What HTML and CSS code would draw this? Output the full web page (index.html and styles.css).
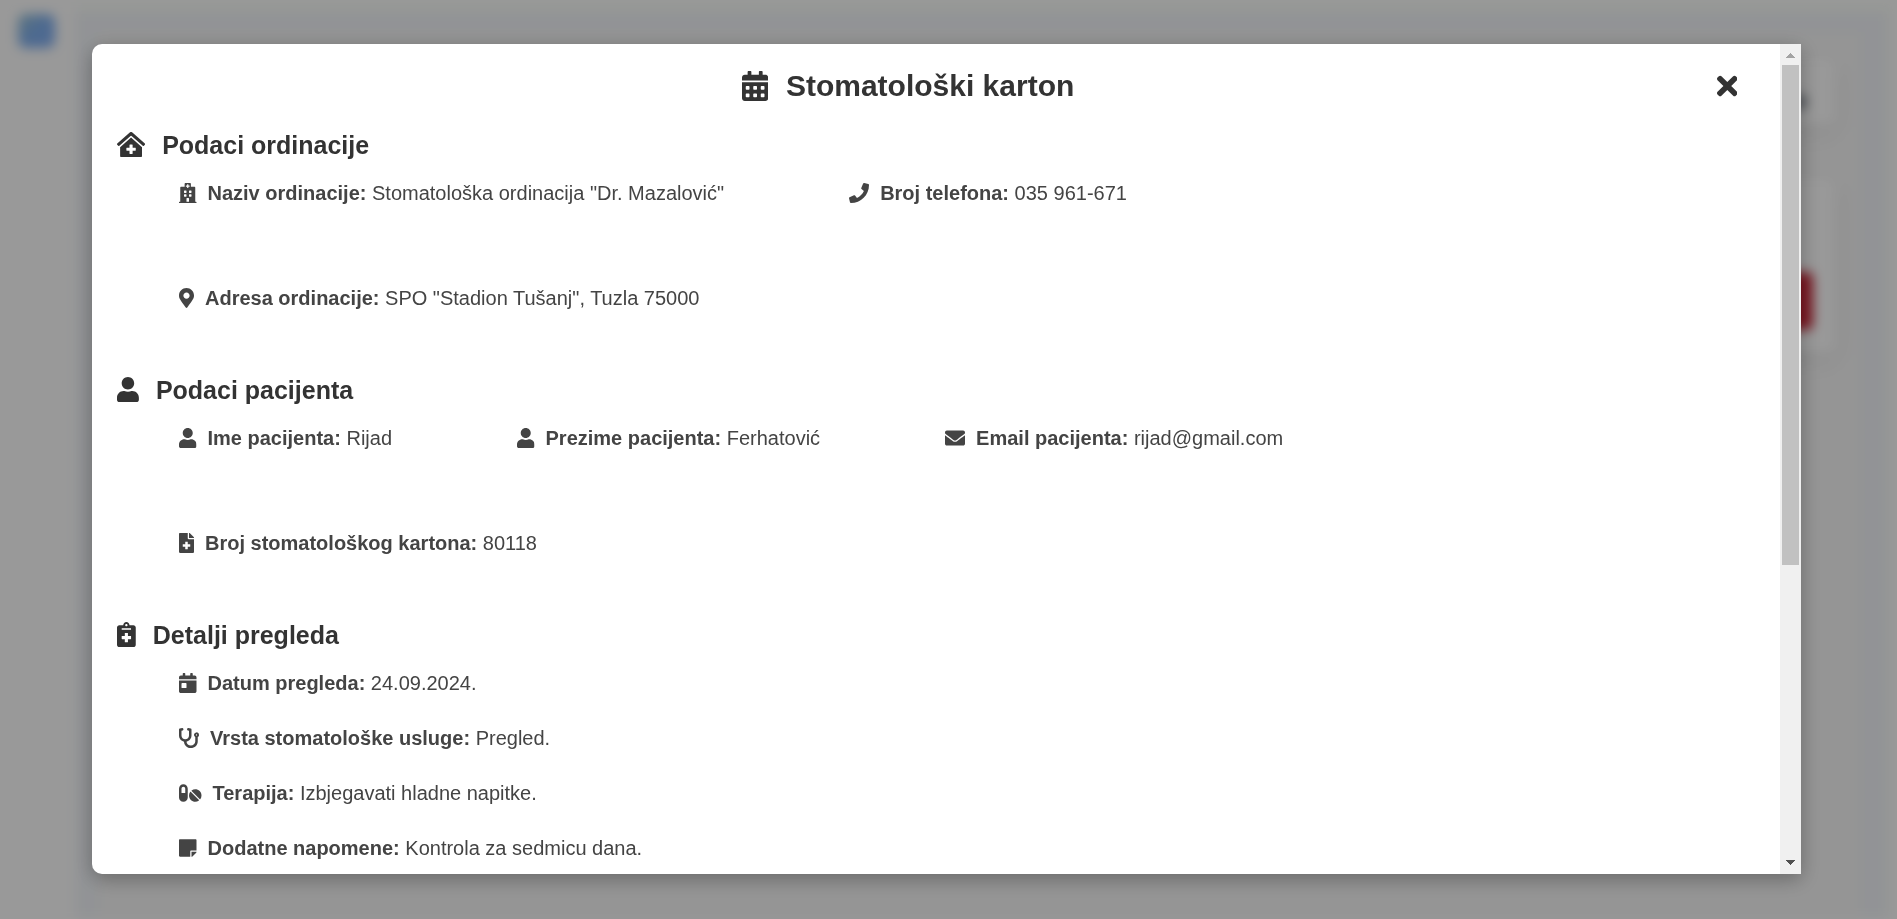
FILE: index.html
```html
<!DOCTYPE html>
<html lang="bs">
<head>
<meta charset="utf-8">
<meta name="viewport" content="width=device-width, initial-scale=1">
<title>Stomatološki karton</title>
<link rel="stylesheet" href="styles.css">
</head>
<body>
<svg class="sprite" aria-hidden="true">
  <symbol id="user" viewBox="0 0 448 512"><path d="M224 256c70.7 0 128-57.3 128-128S294.7 0 224 0 96 57.3 96 128s57.3 128 128 128zm89.6 32h-16.7c-22.2 10.2-46.9 16-72.9 16s-50.6-5.8-72.9-16h-16.7C60.2 288 0 348.2 0 422.4V464c0 26.5 21.5 48 48 48h352c26.5 0 48-21.5 48-48v-41.6c0-74.2-60.2-134.4-134.4-134.4z"/></symbol>
</svg>

<div class="page" aria-hidden="true">
  <div class="sidebar"><div class="logo"></div></div>
  <div class="content">
    <div class="panel">
      <div class="card card-top"><div class="dot"></div></div>
      <div class="card card-main"><div class="danger"></div></div>
    </div>
  </div>
</div>

<div class="overlay">
  <div class="modal" role="dialog" aria-modal="true" aria-labelledby="modal-title">
    <div class="modal-body">
      <header class="modal-header">
        <h1 class="modal-title" id="modal-title">
          <svg class="icon" viewBox="0 0 448 512" aria-hidden="true"><path d="M0 464c0 26.5 21.5 48 48 48h352c26.5 0 48-21.5 48-48V192H0v272zm320-196c0-6.600 5.400-12 12-12h40c6.600 0 12 5.400 12 12v40c0 6.600-5.400 12-12 12h-40c-6.600 0-12-5.400-12-12v-40zm0 128c0-6.600 5.400-12 12-12h40c6.600 0 12 5.400 12 12v40c0 6.600-5.400 12-12 12h-40c-6.600 0-12-5.400-12-12v-40zM192 268c0-6.600 5.400-12 12-12h40c6.600 0 12 5.400 12 12v40c0 6.600-5.400 12-12 12h-40c-6.600 0-12-5.400-12-12v-40zm0 128c0-6.600 5.400-12 12-12h40c6.600 0 12 5.400 12 12v40c0 6.600-5.400 12-12 12h-40c-6.600 0-12-5.400-12-12v-40zM64 268c0-6.600 5.400-12 12-12h40c6.600 0 12 5.400 12 12v40c0 6.600-5.400 12-12 12H76c-6.600 0-12-5.400-12-12v-40zm0 128c0-6.600 5.400-12 12-12h40c6.600 0 12 5.400 12 12v40c0 6.600-5.400 12-12 12H76c-6.600 0-12-5.400-12-12v-40zM400 64h-48V16c0-8.800-7.200-16-16-16h-32c-8.800 0-16 7.200-16 16v48H160V16c0-8.800-7.200-16-16-16h-32c-8.800 0-16 7.200-16 16v48H48C21.500 64 0 85.500 0 112v48h448v-48c0-26.500-21.500-48-48-48z"/></svg>
          <span>Stomatološki karton</span>
        </h1>
        <button class="close" type="button" aria-label="Zatvori">
          <svg class="icon" viewBox="0 0 352 512" aria-hidden="true"><path d="M242.72 256l100.07-100.07c12.28-12.28 12.28-32.19 0-44.48l-22.24-22.24c-12.28-12.28-32.19-12.28-44.48 0L176 189.28 75.93 89.21c-12.28-12.28-32.19-12.28-44.48 0L9.21 111.45c-12.28 12.28-12.28 32.19 0 44.48L109.28 256 9.21 356.07c-12.28 12.28-12.28 32.19 0 44.48l22.24 22.24c12.28 12.28 32.2 12.28 44.48 0L176 322.72l100.07 100.07c12.28 12.28 32.2 12.28 44.48 0l22.24-22.24c12.28-12.28 12.28-32.19 0-44.48L242.72 256z"/></svg>
        </button>
      </header>

      <section class="section">
        <h2 class="section-title">
          <svg class="icon" viewBox="0 0 576 512" aria-hidden="true"><path d="M288 115L69.47 307.71c-1.62 1.46-3.69 2.14-5.47 3.35V496a16 16 0 0 0 16 16h416a16 16 0 0 0 16-16V311.1c-1.7-1.16-3.72-1.82-5.26-3.2zm96 261a8 8 0 0 1-8 8h-56v56a8 8 0 0 1-8 8h-48a8 8 0 0 1-8-8v-56h-56a8 8 0 0 1-8-8v-48a8 8 0 0 1 8-8h56v-56a8 8 0 0 1 8-8h48a8 8 0 0 1 8 8v56h56a8 8 0 0 1 8 8zm186.69-139.72l-255.94-226a39.85 39.85 0 0 0-53.45 0l-256 226a16 16 0 0 0-1.21 22.6L25.5 282.7a16 16 0 0 0 22.6 1.21L277.42 81.63a16 16 0 0 1 21.17 0L527.91 283.9a16 16 0 0 0 22.6-1.21l21.4-23.82a16 16 0 0 0-1.22-22.59z"/></svg>
          <span>Podaci ordinacije</span>
        </h2>
        <div class="fields">
          <p class="field">
            <svg class="icon" viewBox="0 0 448 512" aria-hidden="true"><path d="M448 492v20H0v-20c0-6.627 5.373-12 12-12h20V120c0-13.255 10.745-24 24-24h88V24c0-13.255 10.745-24 24-24h112c13.255 0 24 10.745 24 24v72h88c13.255 0 24 10.745 24 24v360h20c6.627 0 12 5.373 12 12zM308 192h-40c-6.627 0-12 5.373-12 12v40c0 6.627 5.373 12 12 12h40c6.627 0 12-5.373 12-12v-40c0-6.627-5.373-12-12-12zm-168 64h40c6.627 0 12-5.373 12-12v-40c0-6.627-5.373-12-12-12h-40c-6.627 0-12 5.373-12 12v40c0 6.627 5.373 12 12 12zm104 128h-40c-6.627 0-12 5.373-12 12v84h64v-84c0-6.627-5.373-12-12-12zm64-96h-40c-6.627 0-12 5.373-12 12v40c0 6.627 5.373 12 12 12h40c6.627 0 12-5.373 12-12v-40c0-6.627-5.373-12-12-12zm-116 12c0-6.627-5.373-12-12-12h-40c-6.627 0-12 5.373-12 12v40c0 6.627 5.373 12 12 12h40c6.627 0 12-5.373 12-12v-40zM182 96h26v26a6 6 0 0 0 6 6h20a6 6 0 0 0 6-6V96h26a6 6 0 0 0 6-6V70a6 6 0 0 0-6-6h-26V38a6 6 0 0 0-6-6h-20a6 6 0 0 0-6 6v26h-26a6 6 0 0 0-6 6v20a6 6 0 0 0 6 6z"/></svg>
            <span><strong>Naziv ordinacije:</strong> Stomatološka ordinacija "Dr. Mazalović"</span>
          </p>
          <p class="field">
            <svg class="icon" viewBox="0 0 512 512" aria-hidden="true"><path d="M493.4 24.6l-104-24c-11.3-2.6-22.9 3.3-27.5 13.9l-48 112c-4.2 9.8-1.4 21.3 6.9 28l60.6 49.6c-36 76.7-98.9 140.5-177.2 177.2l-49.6-60.6c-6.8-8.3-18.2-11.1-28-6.9l-112 48C3.9 366.5-2 378.1.6 389.4l24 104C27.1 504.2 36.7 512 48 512c256.1 0 464-207.5 464-464 0-11.2-7.7-20.9-18.6-23.4z"/></svg>
            <span><strong>Broj telefona:</strong> 035 961-671</span>
          </p>
          <p class="field">
            <svg class="icon" viewBox="0 0 384 512" aria-hidden="true"><path d="M172.268 501.67C26.97 291.031 0 269.413 0 192 0 85.961 85.961 0 192 0s192 85.961 192 192c0 77.413-26.97 99.031-172.268 309.67-9.535 13.774-29.93 13.773-39.464 0zM192 272c44.183 0 80-35.817 80-80s-35.817-80-80-80-80 35.817-80 80 35.817 80 80 80z"/></svg>
            <span><strong>Adresa ordinacije:</strong> SPO "Stadion Tušanj", Tuzla 75000</span>
          </p>
        </div>
      </section>

      <section class="section">
        <h2 class="section-title">
          <svg class="icon" viewBox="0 0 448 512" aria-hidden="true"><use href="#user"/></svg>
          <span>Podaci pacijenta</span>
        </h2>
        <div class="fields">
          <p class="field">
            <svg class="icon" viewBox="0 0 448 512" aria-hidden="true"><use href="#user"/></svg>
            <span><strong>Ime pacijenta:</strong> Rijad</span>
          </p>
          <p class="field">
            <svg class="icon" viewBox="0 0 448 512" aria-hidden="true"><use href="#user"/></svg>
            <span><strong>Prezime pacijenta:</strong> Ferhatović</span>
          </p>
          <p class="field">
            <svg class="icon" viewBox="0 0 512 512" aria-hidden="true"><path d="M502.3 190.8c3.9-3.1 9.7-.2 9.7 4.7V400c0 26.5-21.5 48-48 48H48c-26.5 0-48-21.5-48-48V195.6c0-5 5.7-7.8 9.7-4.7 22.4 17.4 52.1 39.5 154.1 113.6 21.1 15.4 56.7 47.8 92.2 47.6 35.7.3 72-32.8 92.3-47.6 102-74.1 131.6-96.3 154-113.7zM256 320c23.2.4 56.6-29.2 73.4-41.4 132.7-96.3 142.8-104.7 173.4-128.7 5.8-4.5 9.2-11.5 9.2-18.900v-19c0-26.500-21.500-48-48-48H48c-26.500 0-48 21.500-48 48v19c0 7.400 3.400 14.300 9.200 18.900 30.600 23.900 40.700 32.400 173.400 128.700 16.800 12.200 50.200 41.800 73.400 41.400z"/></svg>
            <span><strong>Email pacijenta:</strong> rijad@gmail.com</span>
          </p>
          <p class="field">
            <svg class="icon" viewBox="0 0 384 512" aria-hidden="true"><path d="M377 105L279.1 7c-4.5-4.5-10.6-7-17-7H256v128h128v-6.1c0-6.3-2.5-12.4-7-16.9zm-153 31V0H24C10.7 0 0 10.7 0 24v464c0 13.3 10.7 24 24 24h336c13.3 0 24-10.7 24-24V160H248c-13.2 0-24-10.8-24-24zm64 160v48c0 4.4-3.6 8-8 8h-56v56c0 4.4-3.6 8-8 8h-48c-4.4 0-8-3.6-8-8v-56h-56c-4.4 0-8-3.6-8-8v-48c0-4.4 3.6-8 8-8h56v-56c0-4.4 3.6-8 8-8h48c4.4 0 8 3.6 8 8v56h56c4.4 0 8 3.6 8 8z"/></svg>
            <span><strong>Broj stomatološkog kartona:</strong> 80118</span>
          </p>
        </div>
      </section>

      <section class="section">
        <h2 class="section-title">
          <svg class="icon" viewBox="0 0 384 512" aria-hidden="true"><path d="M336 64h-80c0-35.3-28.7-64-64-64s-64 28.7-64 64H48C21.5 64 0 85.5 0 112v352c0 26.5 21.5 48 48 48h288c26.5 0 48-21.5 48-48V112c0-26.5-21.5-48-48-48zM192 40c13.3 0 24 10.7 24 24s-10.7 24-24 24-24-10.7-24-24 10.7-24 24-24zm96 304c0 4.4-3.6 8-8 8h-56v56c0 4.4-3.6 8-8 8h-48c-4.4 0-8-3.6-8-8v-56h-56c-4.4 0-8-3.6-8-8v-48c0-4.4 3.6-8 8-8h56v-56c0-4.4 3.6-8 8-8h48c4.4 0 8 3.6 8 8v56h56c4.4 0 8 3.6 8 8v48zm0-192c0 4.4-3.6 8-8 8H104c-4.4 0-8-3.6-8-8v-16c0-4.4 3.6-8 8-8h176c4.4 0 8 3.6 8 8v16z"/></svg>
          <span>Detalji pregleda</span>
        </h2>
        <div class="fields fields-stacked">
          <p class="field">
            <svg class="icon" viewBox="0 0 448 512" aria-hidden="true"><path d="M0 464c0 26.5 21.5 48 48 48h352c26.5 0 48-21.5 48-48V192H0v272zm64-192c0-8.8 7.2-16 16-16h96c8.8 0 16 7.2 16 16v96c0 8.8-7.2 16-16 16H80c-8.8 0-16-7.2-16-16v-96zM400 64h-48V16c0-8.8-7.2-16-16-16h-32c-8.8 0-16 7.2-16 16v48H160V16c0-8.8-7.2-16-16-16h-32c-8.8 0-16 7.2-16 16v48H48C21.5 64 0 85.5 0 112v48h448v-48c0-26.5-21.5-48-48-48z"/></svg>
            <span><strong>Datum pregleda:</strong> 24.09.2024.</span>
          </p>
          <p class="field">
            <svg class="icon" viewBox="0 0 512 512" aria-hidden="true"><path d="M447.1 112c-34.2.5-62.3 28.4-63 62.6-.5 24.3 12.5 45.6 32 56.8V344c0 57.3-50.2 104-112 104-60 0-109.2-44.1-111.9-99.2C265 333.8 320 269.2 320 192V36.6c0-11.4-8.1-21.3-19.3-23.5L237.8.5c-13-2.6-25.6 5.8-28.2 18.8L206.4 35c-2.6 13 5.8 25.6 18.8 28.2l30.7 6.1v121.4c0 52.9-42.2 96.7-95.1 97.2-53.4.5-96.9-42.7-96.9-96V69.4l30.7-6.1c13-2.6 21.4-15.2 18.8-28.2l-3.1-15.7C107.7 6.4 95.1-2 82.1.6L19.3 13C8.1 15.3 0 25.1 0 36.6V192c0 77.3 55.1 142 128.1 156.8C130.7 439.2 208.6 512 304 512c97 0 176-75.4 176-168V231.4c19.1-11.1 32-31.7 32-55.4 0-35.7-29.2-64.5-64.9-64zm.9 80c-8.8 0-16-7.2-16-16s7.2-16 16-16 16 7.2 16 16-7.2 16-16 16z"/></svg>
            <span><strong>Vrsta stomatološke usluge:</strong> Pregled.</span>
          </p>
          <p class="field">
            <svg class="icon" viewBox="0 0 576 512" aria-hidden="true"><path d="M112 32C50.1 32 0 82.1 0 144v224c0 61.9 50.1 112 112 112s112-50.1 112-112V144c0-61.9-50.1-112-112-112zm48 224H64V144c0-26.5 21.5-48 48-48s48 21.5 48 48v112zm139.7-29.7c-3.5-3.5-9.4-3.1-12.3.8-45.3 62.5-40.4 150.1 15.9 206.4 56.3 56.3 143.9 61.2 206.4 15.9 4-2.9 4.3-8.8.8-12.3L299.7 226.3zm229.8-19c-56.3-56.3-143.9-61.2-206.4-15.9-4 2.9-4.3 8.800-.8 12.300l210.800 210.800c3.500 3.500 9.400 3.100 12.300-.8 45.300-62.600 40.500-150.100-15.900-206.400z"/></svg>
            <span><strong>Terapija:</strong> Izbjegavati hladne napitke.</span>
          </p>
          <p class="field">
            <svg class="icon" viewBox="0 0 448 512" aria-hidden="true"><path d="M312 320h136V56c0-13.3-10.7-24-24-24H24C10.7 32 0 42.7 0 56v400c0 13.3 10.7 24 24 24h264V344c0-13.2 10.8-24 24-24zm129 55l-98 98c-4.500 4.500-10.600 7-17 7h-6V352h128v6.100c0 6.300-2.500 12.400-7 16.900z"/></svg>
            <span><strong>Dodatne napomene:</strong> Kontrola za sedmicu dana.</span>
          </p>
        </div>
      </section>
    </div>
    <div class="scrollbar" aria-hidden="true">
      <svg class="arrow arrow-up" viewBox="0 0 21 21" shape-rendering="crispEdges"><path d="M6 14h9l-4.500-5z"/></svg>
      <div class="track"><div class="thumb"></div></div>
      <svg class="arrow" viewBox="0 0 21 21" shape-rendering="crispEdges"><path d="M6 7h9l-4.500 5z"/></svg>
    </div>
  </div>
</div>
</body>
</html>
```

FILE: styles.css
```css
* {
  box-sizing: border-box;
}

body {
  margin: 0;
  min-height: 100vh;
  overflow: hidden;
  background: #fff;
  color: #444;
  font-family: "Liberation Sans", Arial, Helvetica, sans-serif;
  font-size: 20px;
}

h1,
h2,
p {
  margin: 0;
}

.sprite {
  display: none;
}

/* Page behind the dialog */
.page {
  display: flex;
  height: 100vh;
  filter: blur(6px);
}

.sidebar {
  flex: none;
  width: 76px;
  padding: 14px 18px;
  background: #fff;
}

.logo {
  width: 37px;
  height: 34px;
  border-radius: 8px;
  background: linear-gradient(135deg, #9cc4d4, #80b0f0 50%, #84b0f4);
}

.content {
  flex: 1;
  padding: 20px 26px 0 22px;
  border-top: 12px solid #fcfffb;
  border-right: 10px solid #fdfffc;
  background: #f3f6fa;
}

.panel {
  display: flex;
  flex-direction: column;
  gap: 54px;
  height: 100%;
  padding: 26px 26px 0;
  background: #f8f8f8;
}

.card {
  display: flex;
  justify-content: flex-end;
  border-radius: 8px;
  background: #fff;
  box-shadow: 0 8px 24px rgba(0, 0, 0, 0.06);
}

.card-top {
  height: 66px;
  padding: 36px 28px 0;
}

.dot {
  width: 16px;
  height: 16px;
  border-radius: 8px;
  background: #8a9098;
}

.card-main {
  height: 174px;
  padding: 94px 22px 0;
}

.danger {
  width: 80px;
  height: 58px;
  border-radius: 6px;
  background: #cb2738;
}

/* Dialog */
.overlay {
  position: fixed;
  inset: 0;
  display: flex;
  padding: 44px 96px 45px 92px;
  background: rgba(0, 0, 0, 0.4);
}

.modal {
  display: flex;
  flex: 1;
  min-width: 0;
  border-radius: 10px 0 0 10px;
  background: #fff;
  box-shadow: 0 5px 20px rgba(0, 0, 0, 0.3);
}

.modal-body {
  flex: 1;
  min-width: 0;
  padding: 25px;
  overflow: auto;
  scrollbar-width: none;
}

.modal-header {
  display: flex;
  align-items: center;
  margin-bottom: 28px;
  color: #333;
}

.modal-title {
  display: flex;
  flex: 1;
  align-items: center;
  justify-content: center;
  gap: 18px;
  font-size: 30px;
  line-height: 34px;
}

.icon {
  flex: none;
  height: 20px;
  margin-bottom: 2px;
  fill: currentColor;
}

.modal-header .icon {
  height: 30px;
  margin-bottom: 0;
}

.close {
  display: flex;
  flex: none;
  justify-content: center;
  width: 56px;
  padding: 0;
  border: 0;
  background: none;
  color: inherit;
  cursor: pointer;
}

.section {
  margin-bottom: 66px;
}

.section-title {
  display: flex;
  align-items: center;
  gap: 17px;
  margin-bottom: 22px;
  color: #333;
  font-size: 25px;
  line-height: 29px;
}

.section-title .icon {
  height: 25px;
}

.fields {
  display: flex;
  flex-wrap: wrap;
  gap: 82px 125px;
  padding: 0 62px;
}

.fields-stacked {
  flex-direction: column;
  gap: 32px;
}

.field {
  display: flex;
  align-items: center;
  gap: 11px;
  line-height: 23px;
}

.scrollbar {
  display: flex;
  flex: none;
  flex-direction: column;
  width: 21px;
  background: #f0f0f0;
}

.arrow {
  flex: none;
  width: 21px;
  height: 21px;
  fill: #505050;
}

.arrow-up {
  fill: #a3a3a3;
}

.track {
  flex: 1;
  padding: 0 2px;
}

.thumb {
  height: 63.5%;
  background: #c1c1c1;
}
```
